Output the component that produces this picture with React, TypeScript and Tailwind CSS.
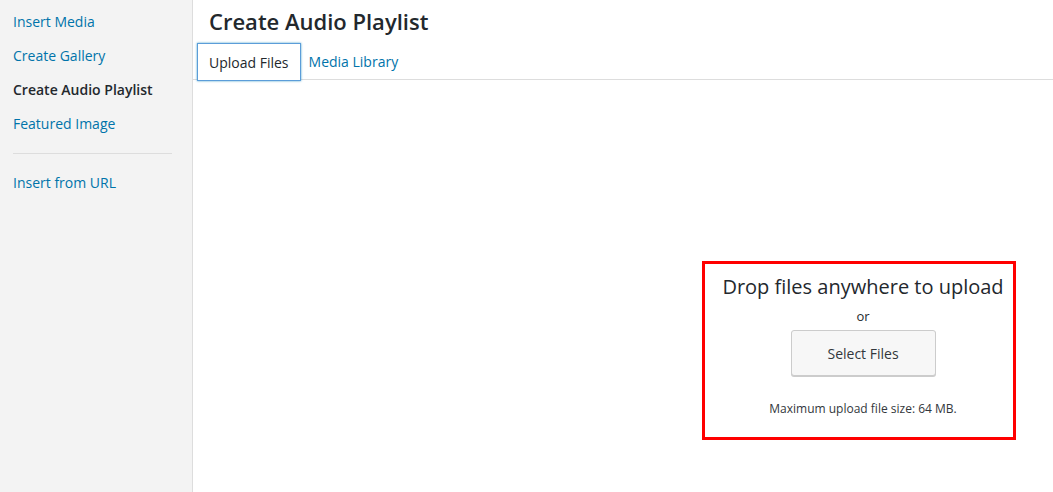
import React from "react";

export default function App() {
  const font = { fontFamily: '"Open Sans", "Noto Sans", sans-serif' };
  return (
    <div className="flex w-[1053px] h-[492px] bg-white overflow-hidden" style={font}>
      <div className="w-[193px] shrink-0 bg-[#f3f3f3] border-r border-[#dddddd] pt-[5px]">
        <div className="flex flex-col text-[14px] leading-[18px]">
          <a className="px-[13px] py-[8px] text-[#0073aa]">Insert Media</a>
          <a className="px-[13px] py-[8px] text-[#0073aa]">Create Gallery</a>
          <a className="px-[13px] py-[8px] text-[#23282d] font-semibold">Create Audio Playlist</a>
          <a className="px-[13px] py-[8px] text-[#0073aa]">Featured Image</a>
          <div className="mx-[13px] mt-[12px] mb-[12px] w-[159px] h-px bg-[#dddddd]" />
          <a className="px-[13px] py-[8px] text-[#0073aa]">Insert from URL</a>
        </div>
      </div>
      <div className="flex-1 flex flex-col">
        <div className="h-[43px] flex items-center px-[16px] pb-[1px]">
          <h1 className="text-[22px] font-semibold text-[#23282d] leading-[30px]">Create Audio Playlist</h1>
        </div>
        <div className="h-[37px] border-b border-[#dddddd] flex items-start pl-[4px]">
          <div className="h-[38px] px-[11px] flex items-center border border-[#5b9dd9] shadow-[0_0_2px_rgba(30,140,190,0.8)] bg-white text-[14px] text-[#23282d]">
            Upload Files
          </div>
          <div className="h-[37px] px-[8px] flex items-center text-[14px] text-[#0073aa]">Media Library</div>
        </div>
        <div className="flex-1 flex justify-end items-start pt-[181px] pr-[37px]">
          <div className="w-[314px] border-[3px] border-[#ff0000] flex flex-col items-center pt-[9px] pb-[20px] text-[#23282d]">
            <div className="text-[20px] leading-[28px] pl-[8px]">Drop files anywhere to upload</div>
            <div className="mt-[6px] text-[13px] leading-[18px] pl-[8px]">or</div>
            <button className="mt-[5px] ml-[8px] w-[145px] h-[46px] bg-[#f7f7f7] border border-[#cccccc] rounded-[3px] shadow-[0_1px_0_#cccccc] text-[14px] text-[#32373c]">
              Select Files
            </button>
            <div className="mt-[25px] text-[12px] leading-[16px] text-[#32373c] pl-[8px]">Maximum upload file size: 64 MB.</div>
          </div>
        </div>
      </div>
    </div>
  );
}
